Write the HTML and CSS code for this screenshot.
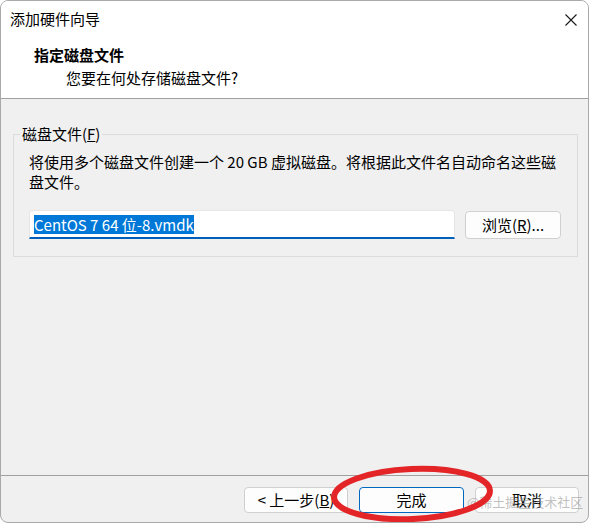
FILE: index.html
```html
<!DOCTYPE html>
<html lang="zh-CN">
<head>
<meta charset="utf-8">
<title>添加硬件向导</title>
<link rel="stylesheet" href="styles.css">
</head>
<body>
<div class="window">
  <div class="titlebar">
    <span class="title">添加硬件向导</span>
    <svg class="close" width="12" height="12" viewBox="0 0 12 12"><path d="M0.5 0.5 L11.5 11.5 M11.5 0.5 L0.5 11.5" stroke="#1a1a1a" stroke-width="1.1" fill="none"/></svg>
  </div>
  <div class="header">
    <div class="h-title">指定磁盘文件</div>
    <div class="h-sub">您要在何处存储磁盘文件?</div>
  </div>
  <div class="content">
    <fieldset class="group">
      <legend>磁盘文件(<u>F</u>)</legend>
      <p class="desc">将使用多个磁盘文件创建一个 20 GB 虚拟磁盘。将根据此文件名自动命名这些磁盘文件。</p>
      <div class="row">
        <div class="input"><span class="sel">CentOS 7 64 位-8.vmdk</span></div>
        <button class="btn browse">浏览(<u>R</u>)...</button>
      </div>
    </fieldset>
  </div>
  <div class="footer">
    <button class="btn">&lt; 上一步(<u>B</u>)</button>
    <button class="btn primary">完成</button>
    <button class="btn">取消</button>
  </div>
  <span class="watermark">@稀土掘金技术社区</span>
  <svg class="mark" width="170" height="64" viewBox="0 0 170 64"><ellipse cx="83" cy="31" rx="78" ry="25" transform="rotate(-2.5 83 31)" fill="none" stroke="#e42528" stroke-width="6"/></svg>
</div>
</body>
</html>
```
FILE: styles.css
```css
* { box-sizing: border-box; }
html, body { margin: 0; padding: 0; }
body {
  width: 592px;
  height: 525px;
  background: #ffffff;
  font-family: "Noto Sans CJK SC", "Noto Sans", sans-serif;
  font-size: 15px;
  color: #000;
  overflow: hidden;
}
.window {
  position: relative;
  width: 589px;
  height: 523px;
  border: 1px solid #a9a9a9;
  border-radius: 8px;
  background: #f0f0f0;
  display: flex;
  flex-direction: column;
  overflow: hidden;
}
.titlebar {
  height: 36px;
  background: #fff;
  display: flex;
  align-items: center;
  justify-content: space-between;
  padding: 0 11px 0 9px;
}
.title { line-height: 20px; }
.close { display: block; margin-top: 1px; }
.header {
  background: #fff;
  padding: 8px 0 10px 33px;
  border-bottom: 1px solid #a0a0a0;
}
.h-title { font-weight: bold; line-height: 20px; }
.h-sub { line-height: 20px; margin-top: 3px; padding-left: 32px; }
.content {
  flex: 1;
  padding: 25px 10px 0 12px;
  border-bottom: 1px solid #a0a0a0;
}
.group {
  margin: 0;
  border: 1px solid #dcdcdc;
  padding: 8px 16px 17px 15px;
}
.group legend {
  padding: 0 2px;
  margin-left: -9px;
  line-height: 20px;
}
.desc {
  margin: 0;
  line-height: 20px;
}
.row {
  display: flex;
  align-items: flex-end;
  gap: 10px;
  margin-top: 18px;
}
.input {
  flex: 1;
  height: 29px;
  background: #fff;
  border: 1px solid #e6e6e6;
  border-bottom: 2px solid #005fb8;
  border-radius: 4px 4px 0 0;
  padding: 1px 0 0 4px;
  display: flex;
  align-items: center;
}
.sel {
  background: #0078d7;
  color: #fff;
  line-height: 19px;
}
.btn {
  font-family: inherit;
  font-size: 15px;
  color: #000;
  background: #fdfdfd;
  border: 1px solid #d0d0d0;
  border-radius: 4px;
  height: 26px;
  padding: 0;
  line-height: 20px;
}
.browse { width: 96px; height: 28px; }
.footer {
  height: 46px;
  display: flex;
  justify-content: flex-end;
  gap: 11px;
  padding: 11px 9px 0 0;
}
.footer .btn { width: 104px; }
.footer .primary { width: 105px; border-color: #0067c0; }
.watermark {
  position: absolute;
  left: 466px;
  top: 492px;
  font-size: 13px;
  line-height: 18px;
  color: rgba(140, 140, 140, 0.55);
  pointer-events: none;
}
.mark {
  position: absolute;
  left: 328px;
  top: 462px;
}
```
